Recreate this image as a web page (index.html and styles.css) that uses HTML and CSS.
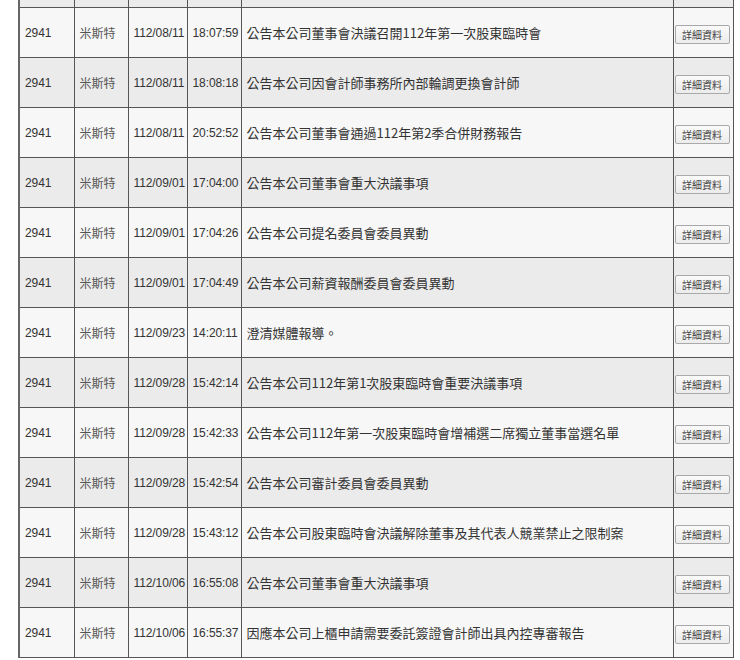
FILE: index.html
```html
<!DOCTYPE html>
<html lang="zh-Hant">
<head>
<meta charset="utf-8">
<link rel="stylesheet" href="styles.css">
</head>
<body>
<div class="wrap">
<table class="list">
<colgroup>
<col class="c-code"><col class="c-name"><col class="c-date"><col class="c-time"><col class="c-subj"><col class="c-btn">
</colgroup>
<tbody>
<tr class="even cut"><td></td><td></td><td></td><td></td><td></td><td></td></tr>
<tr class="odd"><td class="num">2941</td><td class="name">米斯特</td><td class="num">112/08/11</td><td class="num">18:07:59</td><td class="subj">公告本公司董事會決議召開112年第一次股東臨時會</td><td class="act"><button class="btn">詳細資料</button></td></tr>
<tr class="even"><td class="num">2941</td><td class="name">米斯特</td><td class="num">112/08/11</td><td class="num">18:08:18</td><td class="subj">公告本公司因會計師事務所內部輪調更換會計師</td><td class="act"><button class="btn">詳細資料</button></td></tr>
<tr class="odd"><td class="num">2941</td><td class="name">米斯特</td><td class="num">112/08/11</td><td class="num">20:52:52</td><td class="subj">公告本公司董事會通過112年第2季合併財務報告</td><td class="act"><button class="btn">詳細資料</button></td></tr>
<tr class="even"><td class="num">2941</td><td class="name">米斯特</td><td class="num">112/09/01</td><td class="num">17:04:00</td><td class="subj">公告本公司董事會重大決議事項</td><td class="act"><button class="btn">詳細資料</button></td></tr>
<tr class="odd"><td class="num">2941</td><td class="name">米斯特</td><td class="num">112/09/01</td><td class="num">17:04:26</td><td class="subj">公告本公司提名委員會委員異動</td><td class="act"><button class="btn">詳細資料</button></td></tr>
<tr class="even"><td class="num">2941</td><td class="name">米斯特</td><td class="num">112/09/01</td><td class="num">17:04:49</td><td class="subj">公告本公司薪資報酬委員會委員異動</td><td class="act"><button class="btn">詳細資料</button></td></tr>
<tr class="odd"><td class="num">2941</td><td class="name">米斯特</td><td class="num">112/09/23</td><td class="num">14:20:11</td><td class="subj">澄清媒體報導。</td><td class="act"><button class="btn">詳細資料</button></td></tr>
<tr class="even"><td class="num">2941</td><td class="name">米斯特</td><td class="num">112/09/28</td><td class="num">15:42:14</td><td class="subj">公告本公司112年第1次股東臨時會重要決議事項</td><td class="act"><button class="btn">詳細資料</button></td></tr>
<tr class="odd"><td class="num">2941</td><td class="name">米斯特</td><td class="num">112/09/28</td><td class="num">15:42:33</td><td class="subj">公告本公司112年第一次股東臨時會增補選二席獨立董事當選名單</td><td class="act"><button class="btn">詳細資料</button></td></tr>
<tr class="even"><td class="num">2941</td><td class="name">米斯特</td><td class="num">112/09/28</td><td class="num">15:42:54</td><td class="subj">公告本公司審計委員會委員異動</td><td class="act"><button class="btn">詳細資料</button></td></tr>
<tr class="odd"><td class="num">2941</td><td class="name">米斯特</td><td class="num">112/09/28</td><td class="num">15:43:12</td><td class="subj">公告本公司股東臨時會決議解除董事及其代表人競業禁止之限制案</td><td class="act"><button class="btn">詳細資料</button></td></tr>
<tr class="even"><td class="num">2941</td><td class="name">米斯特</td><td class="num">112/10/06</td><td class="num">16:55:08</td><td class="subj">公告本公司董事會重大決議事項</td><td class="act"><button class="btn">詳細資料</button></td></tr>
<tr class="odd"><td class="num">2941</td><td class="name">米斯特</td><td class="num">112/10/06</td><td class="num">16:55:37</td><td class="subj">因應本公司上櫃申請需要委託簽證會計師出具內控專審報告</td><td class="act"><button class="btn">詳細資料</button></td></tr>
</tbody>
</table>
</div>
</body>
</html>
```
FILE: styles.css
```css
html, body {
  margin: 0;
  padding: 0;
  background: #ffffff;
}
body {
  font-family: "Liberation Sans", "Noto Sans CJK TC", sans-serif;
  color: #333333;
  overflow: hidden;
}
.wrap {
  padding-left: 18px;
}
.list {
  width: 714px;
  table-layout: fixed;
  border-collapse: collapse;
  border-left: 2px solid #666666;
  border-right: 1px solid #666666;
}
.c-code { width: 55px; }
.c-name { width: 54px; }
.c-date { width: 59px; }
.c-time { width: 54px; }
.c-subj { width: 432px; }
.c-btn { width: 60px; }
.list td {
  height: 49px;
  border: 1px solid #555555;
  padding: 0 0 0 5px;
  white-space: nowrap;
  overflow: hidden;
  vertical-align: middle;
  text-align: left;
}
.list tr.cut td {
  height: 7px;
  border-top: 0;
}
.list tr.odd td { background: #f7f7f7; }
.list tr.even td { background: #ebebeb; }
.num {
  font-size: 12px;
  letter-spacing: -0.1px;
}
.name {
  font-family: "Noto Sans CJK TC", sans-serif;
  font-size: 12px;
  color: #555555;
}
.subj {
  font-family: "Noto Sans CJK TC", sans-serif;
  font-size: 13px;
  color: #333333;
}
.list td.act {
  padding: 0 0 0 1px;
}
.btn {
  display: block;
  width: 55px;
  height: 19px;
  margin-top: 3px;
  padding: 0;
  font-family: "Noto Sans CJK TC", sans-serif;
  font-size: 10px;
  line-height: 17px;
  color: #444444;
  background: linear-gradient(#fafafa, #ececec);
  border: 1px solid #a9a9a9;
  border-radius: 2px;
}
```
